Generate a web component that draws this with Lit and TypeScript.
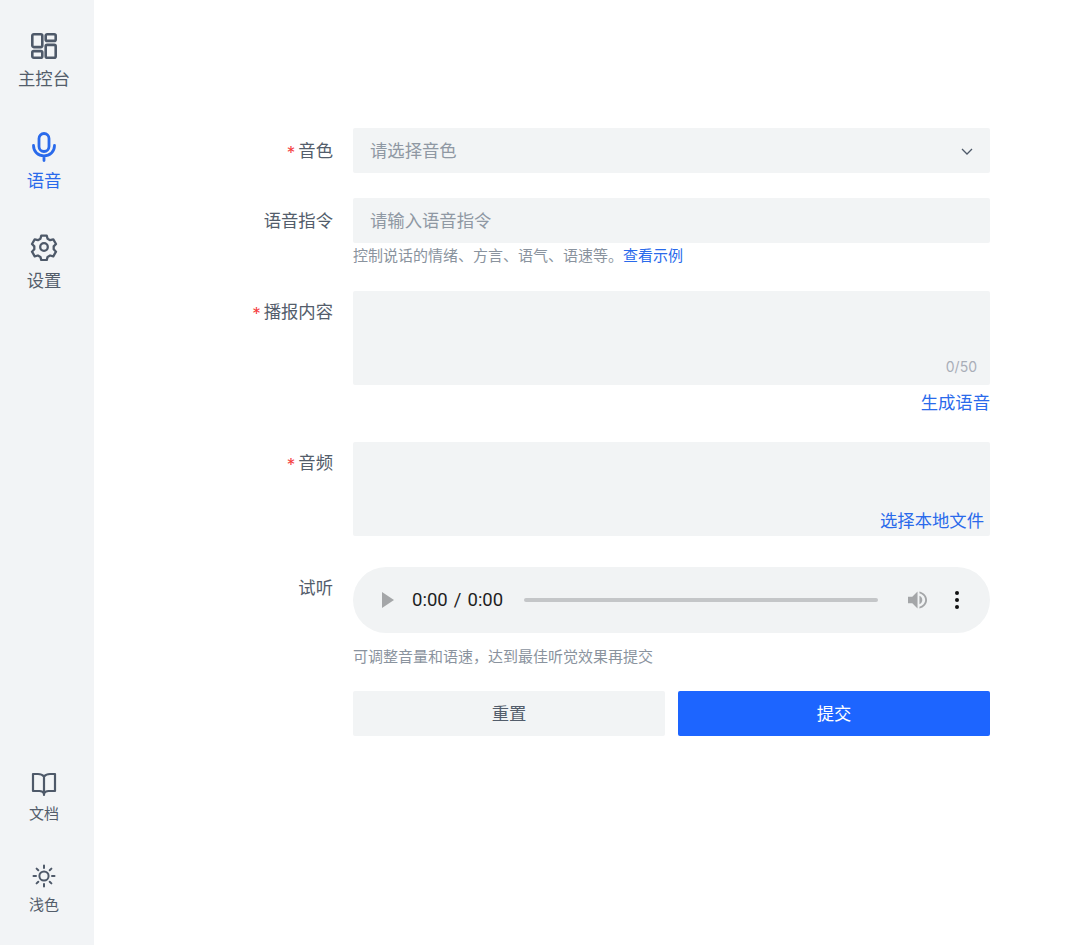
import { LitElement, html, css } from "lit";
import { customElement } from "lit/decorators.js";

const icons = {
  dash: html`<svg viewBox="0 0 28 28" width="28" height="28" fill="none" stroke="currentColor" stroke-width="2.600" stroke-linejoin="round"><rect x="2.300" y="2.300" width="10" height="12.800" rx="1.500"/><rect x="2.300" y="19.100" width="10" height="6.600" rx="1.500"/><rect x="15.700" y="2.300" width="10" height="6.600" rx="1.500"/><rect x="15.700" y="12.900" width="10" height="12.800" rx="1.500"/></svg>`,
  mic: html`<svg viewBox="0 0 28 32" width="28" height="32" fill="none" stroke="currentColor" stroke-width="2.800" stroke-linecap="round"><rect x="9" y="2.500" width="10" height="18" rx="5"/><path d="M3.500 14.500c0 6.200 4.600 10.400 10.500 10.400s10.500-4.200 10.500-10.400M14 25v4.500"/></svg>`,
  gear: html`<svg viewBox="0 0 28 28" width="28" height="28" fill="none" stroke="currentColor" stroke-width="2.300" stroke-linejoin="round"><path d="M11.300 2.600h5.400l.9 3.200 2.500 1.400 3.200-.8 2.700 4.600-2.300 2.400v2.900l2.300 2.400-2.700 4.600-3.200-.8-2.500 1.400-.9 3.200h-5.400l-.9-3.200-2.500-1.400-3.200.8-2.700-4.600 2.300-2.400v-2.900L2 11l2.700-4.600 3.200.8 2.500-1.400z"/><circle cx="14" cy="14" r="3.800"/></svg>`,
  book: html`<svg viewBox="0 0 28 28" width="28" height="28" fill="none" stroke="currentColor" stroke-width="2.200" stroke-linejoin="round" stroke-linecap="round"><path d="M14 6.500C12.500 4.800 10.500 4 8 4H3v17h6.500c2 0 3.500.7 4.500 2.500 1-1.800 2.500-2.500 4.500-2.500H25V4h-5c-2.500 0-4.500.8-6 2.500zM14 6.500V25"/></svg>`,
  sun: html`<svg viewBox="0 0 26 26" width="26" height="26" fill="none" stroke="currentColor" stroke-width="2" stroke-linecap="round"><circle cx="13" cy="13" r="4.600"/><path d="M13 2.500v2.500M13 21v2.500M2.500 13H5M21 13h2.500M5.600 5.600l1.700 1.700M18.700 18.700l1.700 1.700M5.600 20.400l1.700-1.700M18.700 7.300l1.700-1.700"/></svg>`,
};

@customElement("app-root")
export class AppRoot extends LitElement {
  static styles = css`
    :host { display: block; height: 945px; background: #fff; color: #4e5969;
      font-family: "Inter", "Noto Sans CJK SC", sans-serif; }
    .page { display: flex; height: 945px; }
    .side { width: 94px; flex: none; background: #f2f4f6; display: flex; flex-direction: column; align-items: center; padding: 32px 6px 0 0; box-sizing: border-box; }
    .nav { display: flex; flex-direction: column; align-items: center; font-size: 17.330px; line-height: 25px; color: #535d6b; }
    .nav svg { display: block; }
    .n1 { gap: 6px; }
    .n1 svg, .n3 svg, .small svg { color: #4e5969; }
    .n2 { margin-top: 40px; color: #2a6aeb; gap: 5px; }
    .n3 { margin-top: 40px; gap: 7px; }
    .spacer { flex: 1; }
    .small { font-size: 15px; line-height: 22px; gap: 5px; }
    .n5 { margin-top: 38px; margin-bottom: 29px; gap: 5px; }
    .form { width: 637px; margin-left: 20px; padding-top: 128px; }
    main { flex: 1; display: flex; padding-left: 239px; box-sizing: border-box; }
    .row { display: flex; position: relative; }
    .label { position: absolute; right: 100%; margin-right: 20px; top: 10px; white-space: nowrap; font-size: 17.330px; line-height: 25px; color: #535d6b; }
    .label i { font-style: normal; color: #f53f3f; margin-right: 3px; font-size: 17px; vertical-align: -2px; line-height: 1; }
    .ctrl { flex: 1; min-width: 0; }
    .field { background: #f2f4f5; height: 45px; border-radius: 2px; display: flex; align-items: center; padding: 0 16px 3px 17px; font-size: 17.330px; color: #8f98a3; justify-content: space-between; box-sizing: border-box; }
    .field svg { margin-top: 3px; }
    .hint { font-size: 15px; line-height: 22px; color: #8a939e; }
    .hint a, .link { color: #2a6aeb; }
    .area { background: #f2f4f5; height: 94px; border-radius: 2px; position: relative; display: flex; align-items: flex-end; justify-content: flex-end; box-sizing: border-box; }
    .count { font-size: 14px; line-height: 20px; color: #a9aeb8; padding: 0 13px 8px 0; }
    .link { font-size: 17.330px; line-height: 25px; text-align: right; }
    .r2 { margin-top: 25px; }
    .r2 .hint { margin-top: 2px; }
    .r3 { margin-top: 24px; }
    .r3 .label, .r4 .label, .r5 .label { top: 8px; }
    .r3 .link { margin-top: 5px; }
    .r4 { margin-top: 27px; }
    .r4 .link { padding: 0 6px 3px 0; }
    .r5 { margin-top: 31px; }
    .audio { height: 66px; background: #f1f3f4; border-radius: 33px; display: flex; align-items: center; padding: 0 31px 0 29px; box-sizing: border-box; color: #1f1f1f; }
    .audio .time { margin-left: 18px; white-space: nowrap; font-family: "Roboto", sans-serif; font-size: 18.500px; word-spacing: 1.500px; }
    .track { flex: 1; height: 4px; border-radius: 2px; background: #c4c6c8; margin: 0 30px 0 21px; }
    .vol { display: block; }
    .dots { display: flex; flex-direction: column; gap: 3px; margin-left: 27px; }
    .dots span { width: 4px; height: 4px; border-radius: 50%; background: #111; display: block; }
    .r5 .hint { margin-top: 13px; }
    .btns { display: grid; grid-template-columns: 1fr 1fr; gap: 13px; margin-top: 23px; }
    .btn { height: 45px; border-radius: 2px; display: flex; align-items: center; justify-content: center; font-size: 17.330px; padding-bottom: 2px; box-sizing: border-box; background: #f2f4f5; color: #535d6b; }
    .btn.primary { background: #1d65ff; color: #fff; }
  `;

  render() {
    return html`<div class="page">
      <aside class="side">
        <div class="nav n1">${icons.dash}<span>主控台</span></div>
        <div class="nav n2">${icons.mic}<span>语音</span></div>
        <div class="nav n3">${icons.gear}<span>设置</span></div>
        <div class="spacer"></div>
        <div class="nav small">${icons.book}<span>文档</span></div>
        <div class="nav small n5">${icons.sun}<span>浅色</span></div>
      </aside>
      <main><div class="form">
        <div class="row"><div class="label"><i>*</i>音色</div><div class="ctrl">
          <div class="field"><span>请选择音色</span>
            <svg width="14" height="14" viewBox="0 0 14 14" fill="none" stroke="#4e5969" stroke-width="1.300"><path d="M2 5l5 5 5-5"/></svg></div>
        </div></div>
        <div class="row r2"><div class="label">语音指令</div><div class="ctrl">
          <div class="field"><span>请输入语音指令</span></div>
          <div class="hint">控制说话的情绪、方言、语气、语速等。<a>查看示例</a></div>
        </div></div>
        <div class="row r3"><div class="label"><i>*</i>播报内容</div><div class="ctrl">
          <div class="area"><span class="count">0/50</span></div>
          <div class="link">生成语音</div>
        </div></div>
        <div class="row r4"><div class="label"><i>*</i>音频</div><div class="ctrl">
          <div class="area"><div class="link">选择本地文件</div></div>
        </div></div>
        <div class="row r5"><div class="label">试听</div><div class="ctrl">
          <div class="audio">
            <svg width="12" height="16" viewBox="0 0 12 16"><path d="M0 0l12 8-12 8z" fill="#a4a6a8"/></svg>
            <span class="time">0:00 / 0:00</span>
            <div class="track"></div>
            <svg class="vol" width="20" height="20" viewBox="0 0 21 20" fill="#a4a6a8"><path d="M0 6.500h4.500L10 1v18l-5.500-5.500H0z"/><path d="M12 5.500c2 .8 3 2.500 3 4.500s-1 3.700-3 4.500z"/><path d="M12 1c4.500 1 8 4.500 8 9s-3.500 8-8 9v-2c3.300-.9 6-3.600 6-7s-2.700-6.100-6-7z"/></svg>
            <div class="dots"><span></span><span></span><span></span></div>
          </div>
          <div class="hint">可调整音量和语速，达到最佳听觉效果再提交</div>
        </div></div>
        <div class="btns"><div class="btn">重置</div><div class="btn primary">提交</div></div>
      </div></main>
    </div>`;
  }
}
